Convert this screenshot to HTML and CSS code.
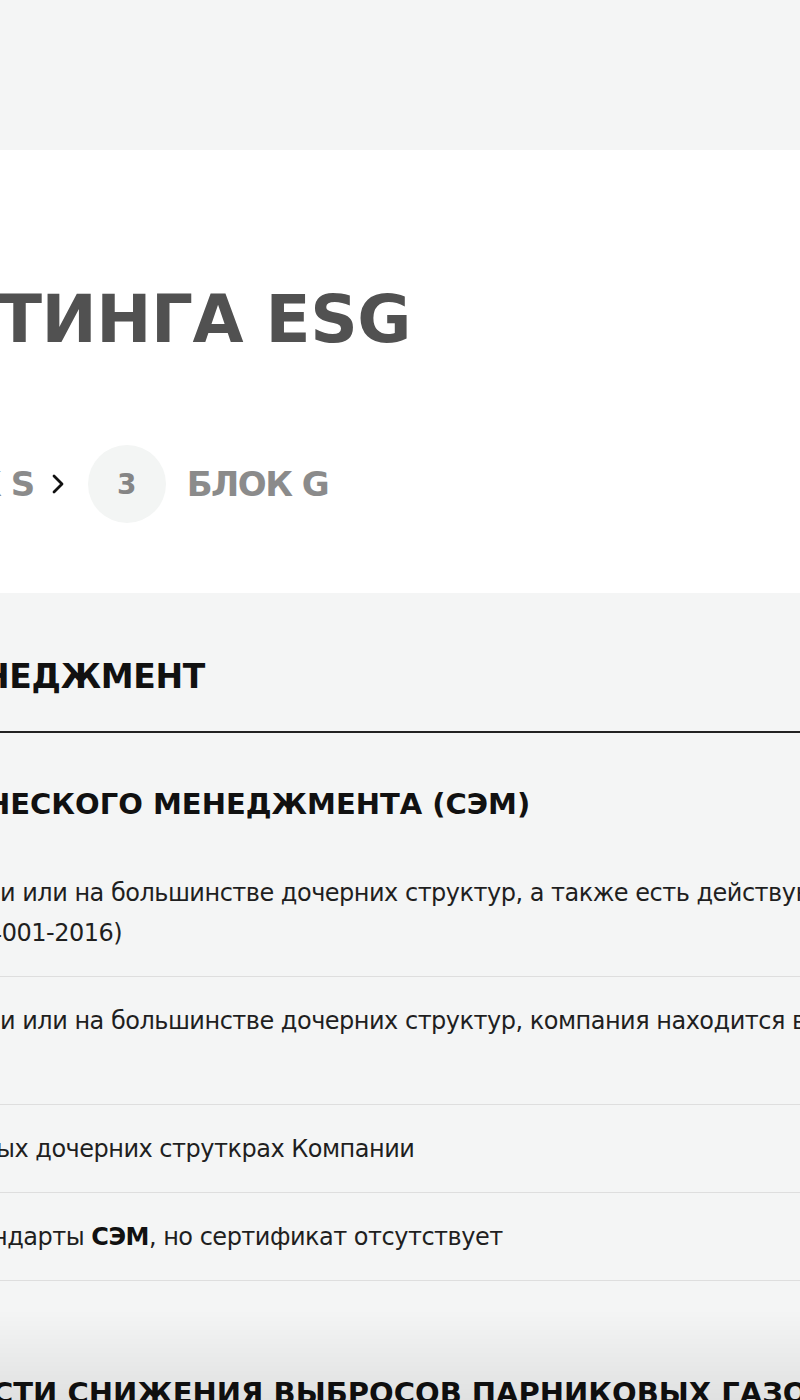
FILE: index.html
```html
<!DOCTYPE html>
<html lang="ru">
<head>
<meta charset="UTF-8">
<meta name="viewport" content="width=device-width, initial-scale=1.0">
<title>Методика рейтинга ESG</title>
<link rel="stylesheet" href="styles.css">
</head>
<body>
    <div class="topbar"></div>

    <section class="hero">
        <h1 class="hero-title">ТИНГА ESG</h1>
        <div class="steps">
            <span class="step-label step-prev"><span class="cut-k">К</span> S</span>
            <svg class="step-arrow" width="12" height="20" viewBox="0 0 12 20">
                <path d="M2 2 L10 10 L2 18" fill="none" stroke="#111" stroke-width="2.8" stroke-linecap="round" stroke-linejoin="round"/>
            </svg>
            <span class="step-num">3</span>
            <span class="step-label">БЛОК G</span>
        </div>
    </section>

    <main class="content">
        <h2 class="block-title"><span class="cut-h">Н</span>ЕДЖМЕНТ</h2>

        <h3 class="question"><span class="cut-q">Н</span>ЕСКОГО МЕНЕДЖМЕНТА (СЭМ)</h3>
        <ul class="answers">
            <li class="answer">и или на большинстве дочерних структур, а также есть действующий сертификат<br><span class="cut-4">4</span>001-2016)</li>
            <li class="answer answer-two">и или на большинстве дочерних структур, компания находится в процессе сертификации</li>
            <li class="answer"><span class="cut-y">ы</span>х дочерних струткрах Компании</li>
            <li class="answer"><span class="cut-n">н</span>дарты <b>СЭМ</b>, но сертификат отсутствует</li>
        </ul>

        <h3 class="question question-next"><span class="cut-c">С</span>ТИ СНИЖЕНИЯ ВЫБРОСОВ ПАРНИКОВЫХ ГАЗОВ</h3>
    </main>

    <div class="fade"></div>
</body>
</html>
```

FILE: styles.css
```css
html, body {
    margin: 0;
    padding: 0;
}

body {
    font-family: 'DejaVu Sans', 'Noto Sans', sans-serif;
    background-color: #f4f5f5;
    color: #1c1c1c;
    overflow-x: hidden;
    white-space: nowrap;
}

.topbar {
    height: 150px;
    background-color: #f4f5f5;
}

.hero {
    background-color: #fff;
    padding: 137px 0 70px;
}

.hero-title {
    margin: 0 0 92px -3px;
    font-size: 66px;
    line-height: 66px;
    font-weight: 700;
    letter-spacing: -0.5px;
    color: #515151;
}

.steps {
    display: flex;
    align-items: center;
    height: 78px;
}

.step-label {
    font-size: 34px;
    font-weight: 700;
    letter-spacing: -1.5px;
    color: #8b8b8b;
}

.cut-k {
    margin-left: -26px;
}

.step-arrow {
    margin: 0 24px 0 18px;
}

.step-num {
    width: 78px;
    height: 78px;
    border-radius: 50%;
    background-color: #f3f5f4;
    display: flex;
    align-items: center;
    justify-content: center;
    font-size: 28px;
    font-weight: 700;
    color: #858585;
    margin-right: 21px;
}

.content {
    padding-top: 64px;
}

.block-title {
    margin: 0;
    font-size: 33px;
    line-height: 40px;
    font-weight: 700;
    letter-spacing: -0.3px;
    color: #111;
    padding-bottom: 34px;
    border-bottom: 2px solid #222;
}

.cut-h {
    margin-left: -18px;
}

.question {
    margin: 53px 0 27px;
    font-size: 29px;
    line-height: 36px;
    font-weight: 700;
    color: #111;
}

.cut-q {
    margin-left: -14px;
}

.cut-c {
    margin-left: -8px;
}

.question-next {
    margin-top: 94px;
}

.answers {
    list-style: none;
    margin: 0;
    padding: 0;
}

.answer {
    font-size: 24px;
    line-height: 40px;
    letter-spacing: -0.5px;
    padding: 24px 0 23px;
    border-bottom: 1px solid #dedede;
    color: #1f1f1f;
}

.answer-two {
    min-height: 80px;
}

.answer b {
    font-weight: 700;
    color: #111;
}

.cut-4 {
    margin-left: -13px;
}

.cut-y {
    margin-left: -4px;
}

.cut-n {
    margin-left: -8px;
}

.fade {
    position: fixed;
    left: 0;
    right: 0;
    bottom: 0;
    height: 90px;
    background: linear-gradient(to bottom, rgba(0, 0, 0, 0), rgba(0, 0, 0, 0.08));
    pointer-events: none;
}
```
